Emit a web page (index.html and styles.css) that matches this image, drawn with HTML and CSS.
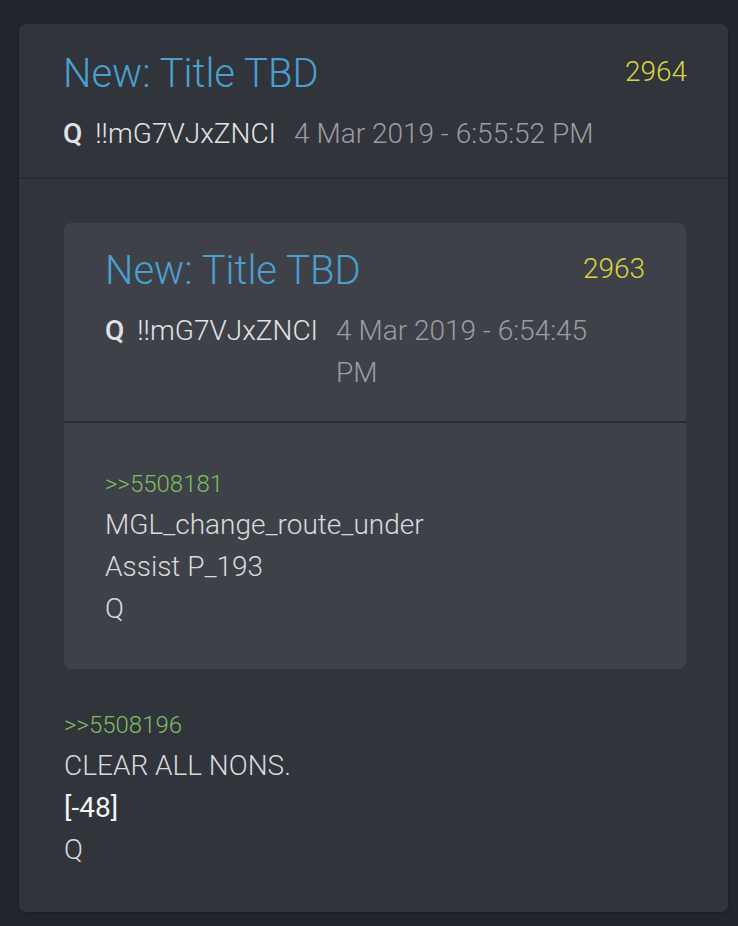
FILE: index.html
```html
<!DOCTYPE html>
<html>
<head>
  <meta http-equiv="Content-Type" content="text/html; charset=UTF-8">
  <title>Post 2964</title>
  <link rel="stylesheet" href="styles.css">
</head>
<body>
  <div class="post">
    <div class="post-head">
      <div class="head-row">
        <div class="title">New: Title TBD</div>
        <div class="num">2964</div>
      </div>
      <div class="meta">
        <span class="name">Q</span>
        <span class="trip">!!mG7VJxZNCI</span>
        <span class="date">4 Mar 2019 - 6:55:52 PM</span>
      </div>
    </div>
    <div class="post-body">
      <div class="post quoted">
        <div class="post-head">
          <div class="head-row">
            <div class="title">New: Title TBD</div>
            <div class="num">2963</div>
          </div>
          <div class="meta">
            <span class="name">Q</span>
            <span class="trip">!!mG7VJxZNCI</span>
            <span class="date">4 Mar 2019 - 6:54:45 PM</span>
          </div>
        </div>
        <div class="post-body">
          <div class="ref">&gt;&gt;5508181</div>
          <div class="line">MGL_change_route_under</div>
          <div class="line">Assist P_193</div>
          <div class="line">Q</div>
        </div>
      </div>
      <div class="text">
        <div class="ref">&gt;&gt;5508196</div>
        <div class="line">CLEAR ALL NONS.</div>
        <div class="line bright">[-48]</div>
        <div class="line">Q</div>
      </div>
    </div>
  </div>
</body>
</html>
```

FILE: styles.css
```css
html, body {
  margin: 0;
  background-color: #23252d;
}
body {
  padding: 24px 10px 14px 19px;
  font-family: "Roboto Light", Roboto, "Noto Sans", sans-serif;
  font-weight: 300;
  color: #d9d9db;
}
.post {
  background-color: #31343b;
  border-radius: 7px;
  box-shadow: 0 1px 3px rgba(0, 0, 0, 0.25);
}
.post-head {
  padding: 26px 41px 22px 44px;
  border-bottom: 2px solid #2a2c33;
}
.head-row {
  display: flex;
  justify-content: space-between;
  align-items: flex-start;
}
.title {
  color: #4a9fcf;
  font-size: 40px;
  line-height: 48px;
}
.num {
  color: #d8d443;
  font-size: 28px;
  line-height: 44px;
}
.meta {
  display: flex;
  gap: 13px;
  margin-top: 15px;
  padding-right: 40px;
  font-size: 28px;
  line-height: 42px;
}
.name {
  font-family: Roboto, "Noto Sans", sans-serif;
  font-weight: 500;
  color: #e2e2e4;
}
.trip {
  color: #e2e2e4;
}
.date {
  margin-left: 5px;
  color: #9b9ca1;
}
.post-body {
  padding: 44px 42px 41px 45px;
}
.quoted {
  background-color: #3f4149;
  box-shadow: none;
}
.quoted .post-head {
  padding: 24px 41px 27px 41px;
}
.quoted .post-body {
  padding: 41px 41px 39px 41px;
}
.ref {
  color: #7dbd5f;
  font-size: 24px;
  line-height: 40px;
}
.line {
  font-size: 28px;
  line-height: 42px;
}
.bright {
  font-family: Roboto, "Noto Sans", sans-serif;
  color: #f4f4f5;
  font-weight: 400;
}
.text {
  margin-top: 36px;
}
```
